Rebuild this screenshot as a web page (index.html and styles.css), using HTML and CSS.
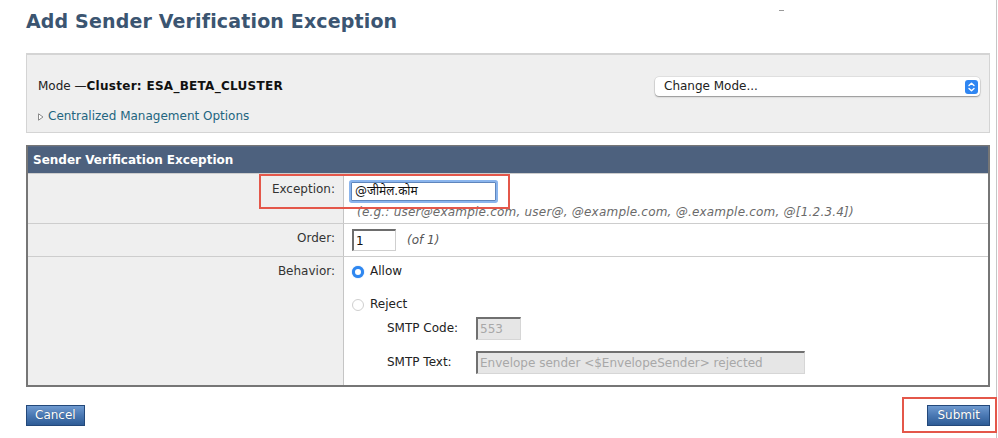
FILE: index.html
```html
<!DOCTYPE html>
<html lang="en">
<head>
<meta charset="utf-8">
<title>Add Sender Verification Exception</title>
<link rel="stylesheet" href="styles.css">
</head>
<body>
<div class="page">
  <span class="dash"></span>
  <h1 class="title">Add Sender Verification Exception</h1>

  <div class="mode-box">
    <div class="mode-row">
      <div class="mode-text">Mode —<b>Cluster: ESA_BETA_CLUSTER</b></div>
      <div class="select">
        <span class="select-text">Change Mode...</span>
        <span class="stepper">
          <svg width="13" height="14" viewBox="0 0 13 14">
            <rect x="0" y="0" width="13" height="14" rx="3" fill="#2f86f2"/>
            <path d="M4 5.6 L6.5 3.3 L9 5.6" fill="none" stroke="#fff" stroke-width="1.4" stroke-linecap="round" stroke-linejoin="round"/>
            <path d="M4 8.4 L6.5 10.7 L9 8.4" fill="none" stroke="#fff" stroke-width="1.4" stroke-linecap="round" stroke-linejoin="round"/>
          </svg>
        </span>
      </div>
    </div>
    <div class="cmo">
      <svg class="tri" width="6" height="8" viewBox="0 0 6 8"><path d="M0.5 0.8 L5 4 L0.5 7.2 Z" fill="#fff" stroke="#8a8a8a" stroke-width="1"/></svg>
      <a class="cmo-link" href="#">Centralized Management Options</a>
    </div>
  </div>

  <div class="form-wrap">
    <div class="form">
      <div class="form-head">Sender Verification Exception</div>
      <div class="frow row-exc">
        <div class="lbl">Exception:</div>
        <div class="val">
          <div class="exc-input">@जीमेल.कोम</div>
          <div class="hint">(e.g.: user@example.com, user@, @example.com, @.example.com, @[1.2.3.4])</div>
        </div>
      </div>
      <div class="frow row-order">
        <div class="lbl">Order:</div>
        <div class="val order-val">
          <div class="order-input">1</div>
          <span class="of">(of 1)</span>
        </div>
      </div>
      <div class="frow row-beh">
        <div class="lbl">Behavior:</div>
        <div class="val">
          <div class="radio-line"><span class="radio on"></span><span>Allow</span></div>
          <div class="radio-line reject"><span class="radio"></span><span>Reject</span></div>
          <div class="sub-line code-line"><span class="sub-lbl">SMTP Code:</span><span class="dis-input code">553</span></div>
          <div class="sub-line text-line"><span class="sub-lbl">SMTP Text:</span><span class="dis-input text">Envelope sender &lt;$EnvelopeSender&gt; rejected</span></div>
        </div>
      </div>
    </div>
    <div class="hl hl-exc"></div>
  </div>

  <div class="actions">
    <button class="btn" type="button">Cancel</button>
    <span class="submit-wrap"><button class="btn" type="button">Submit</button></span>
  </div>
</div>
</body>
</html>
```

FILE: styles.css
```css
html, body {
  margin: 0;
  padding: 0;
  background: #fff;
}
body {
  font-family: "DejaVu Sans", Verdana, sans-serif;
  font-size: 12px;
  line-height: 15px;
  color: #333;
}
.page {
  position: relative;
  width: 964px;
  min-height: 438px;
  padding: 0 6px 0 26px;
  border-right: 1px solid #c6c6c6;
}
.dash {
  position: absolute;
  left: 779px;
  top: 10px;
  width: 5px;
  height: 1px;
  background: #9a9a9a;
}
.title {
  margin: 0;
  padding-top: 9px;
  font-size: 19px;
  line-height: 24px;
  font-weight: bold;
  letter-spacing: 0.15px;
  color: #3b5571;
}

/* mode box */
.mode-box {
  margin-top: 20px;
  height: 80px;
  box-sizing: border-box;
  background: #efefef;
  border: 1px solid #d4d4d4;
  border-top-width: 2px;
  padding: 22px 9px 0 11px;
}
.mode-row {
  display: flex;
  justify-content: space-between;
  align-items: center;
}
.mode-text {
  color: #222;
}
.mode-text b {
  color: #111;
  letter-spacing: 0.28px;
}
.select {
  width: 325px;
  height: 19px;
  box-sizing: border-box;
  background: #fff;
  border-radius: 4px;
  box-shadow: 0 0 0 0.5px rgba(0,0,0,0.12), 0 1px 1.5px rgba(0,0,0,0.35);
  display: flex;
  align-items: center;
  justify-content: space-between;
  padding: 0 2px 0 9px;
}
.select-text {
  color: #222;
  font-size: 12px;
}
.stepper {
  display: flex;
}
.cmo {
  margin-top: 13px;
  display: flex;
  align-items: center;
  gap: 4px;
}
.tri {
  display: block;
}
.cmo-link {
  color: #23657f;
  text-decoration: none;
}

/* form */
.form-wrap {
  position: relative;
  margin-top: 12px;
}
.form {
  border: 2px solid #767676;
  border-top-width: 1px;
}
.form-head {
  height: 27px;
  box-sizing: border-box;
  background: #4d617e;
  color: #fff;
  font-weight: bold;
  font-size: 12px;
  line-height: 15px;
  padding: 6px 0 0 5px;
  border-top: 1px solid #5a6a84;
}
.frow {
  display: grid;
  grid-template-columns: 316px 1fr;
  border-top: 1px solid #cdcdcd;
}
.lbl {
  background: #efefef;
  border-right: 1px solid #c5c5c5;
  text-align: right;
  padding: 8px 8px 0 0;
  color: #333;
}
.val {
  padding: 8px 6px 0 8px;
}
.row-exc .val {
  padding-bottom: 3px;
}
.exc-input {
  margin-left: -1px;
  width: 145px;
  height: 19px;
  box-sizing: border-box;
  border: 1px solid #5f86bd;
  border-radius: 1px;
  box-shadow: 0 0 0 2px #8bb5ed;
  padding: 1px 3px;
  font-family: "DejaVu Sans", "Noto Sans", sans-serif;
  font-size: 12px;
  line-height: 15px;
  color: #111;
  background: #fff;
}
.hint {
  margin: 4px 0 0 5px;
  font-style: italic;
  letter-spacing: 0.21px;
  color: #6a6a6a;
}

.row-order .lbl {
  padding-top: 7px;
}
.order-val {
  display: flex;
  align-items: center;
  gap: 11px;
  padding-top: 5px;
  padding-bottom: 5px;
}
.order-input {
  width: 44px;
  height: 22px;
  box-sizing: border-box;
  border-style: solid;
  border-width: 2px 1px 1px 2px;
  border-color: #6d6d6d #cfcfcf #cfcfcf #6d6d6d;
  padding: 2px 2px;
  color: #111;
  line-height: 16px;
  background: #fff;
}
.of {
  font-style: italic;
  color: #555;
}

.row-beh .lbl {
  padding-top: 7px;
}
.row-beh .val {
  padding-top: 7px;
  padding-bottom: 11px;
}
.radio-line {
  display: flex;
  align-items: center;
  gap: 6px;
  color: #222;
}
.radio-line.reject {
  margin-top: 18px;
}
.radio {
  width: 12px;
  height: 12px;
  box-sizing: border-box;
  border-radius: 50%;
  border: 1px solid #cfcfcf;
  background: #fff;
}
.radio.on {
  border: 3.5px solid #2f87f0;
  box-shadow: 0 0 1px #2f87f0;
}
.sub-line {
  display: flex;
  align-items: center;
  padding-left: 35px;
  color: #222;
}
.code-line {
  margin-top: 5px;
}
.text-line {
  margin-top: 11px;
}
.sub-lbl {
  width: 89px;
}
.dis-input {
  height: 23px;
  box-sizing: border-box;
  background: #e6e6e6;
  border-style: solid;
  border-width: 2px 1px 1px 2px;
  border-color: #707070 #d6d6d6 #d6d6d6 #707070;
  color: #a8a8a8;
  padding: 2px 2px;
  line-height: 17px;
}
.dis-input.code {
  width: 45px;
}
.dis-input.text {
  width: 329px;
}

.hl {
  position: absolute;
  border: 2px solid #e4574a;
  box-sizing: border-box;
  pointer-events: none;
}
.hl-exc {
  left: 233px;
  top: 29px;
  width: 251px;
  height: 35px;
}

/* actions */
.actions {
  margin-top: 18px;
  display: flex;
  justify-content: space-between;
  align-items: flex-start;
}
.btn {
  height: 21px;
  box-sizing: border-box;
  padding: 0 8px;
  margin: 0;
  border: 1px solid #23487a;
  background: linear-gradient(#6f9ad0, #4a78b3 50%, #2e5c96);
  color: #fff;
  font-family: "DejaVu Sans", Verdana, sans-serif;
  font-size: 12px;
  line-height: 17px;
  text-shadow: 0 0 1px rgba(0,0,0,0.4);
  border-radius: 0;
  cursor: pointer;
}
.submit-wrap .btn {
  padding: 0 9px;
}
.submit-wrap {
  position: relative;
  display: inline-block;
}
.submit-wrap::after {
  content: "";
  position: absolute;
  left: -25px;
  right: -7px;
  top: -8px;
  bottom: -7px;
  border: 2px solid #e4574a;
  pointer-events: none;
}
```
